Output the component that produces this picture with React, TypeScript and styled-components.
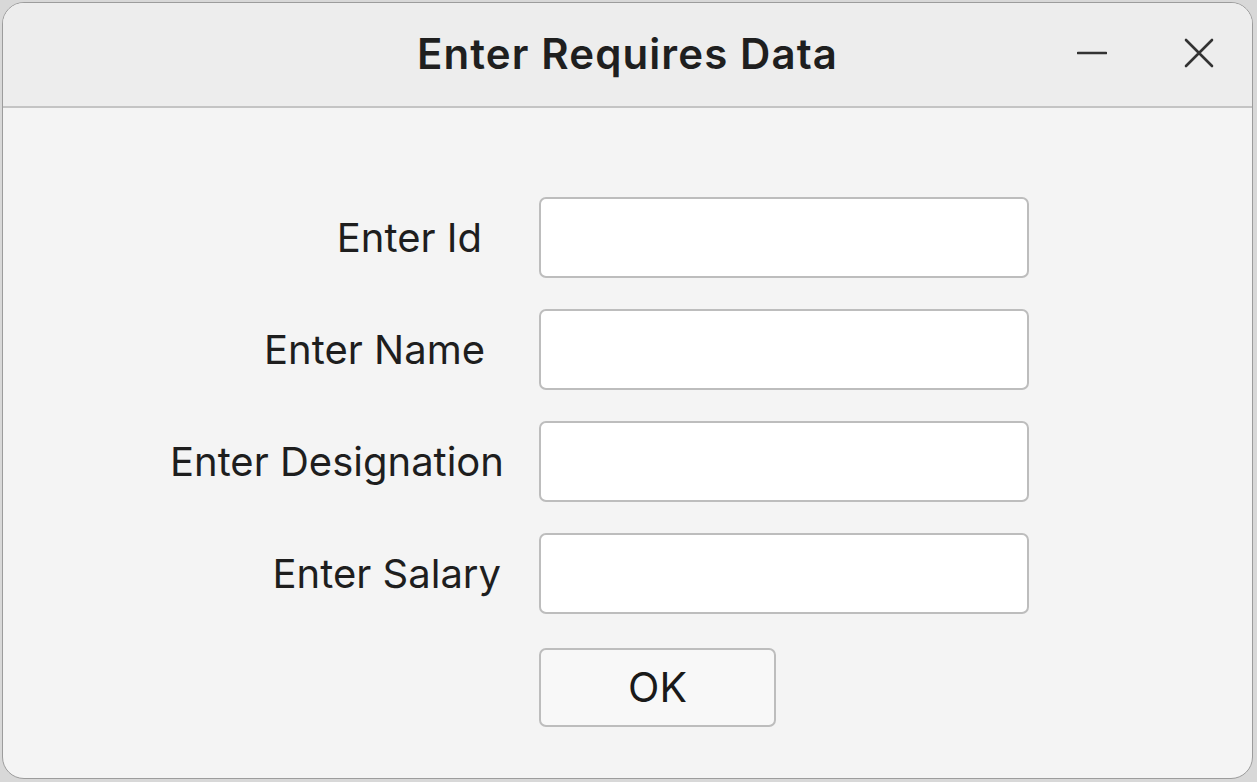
import React from "react";
import styled, { createGlobalStyle } from "styled-components";

const Global = createGlobalStyle`
  html, body { margin: 0; padding: 0; background: #d8d8d8; }
  body { font-family: Inter, "Noto Sans", sans-serif; }
  * { box-sizing: border-box; }
`;

const Page = styled.div`
  width: 1257px;
  height: 782px;
  padding: 2px 0 0 2px;
  background: #d8d8d8;
`;

const Window = styled.div`
  width: 1251px;
  height: 777px;
  border: 1.5px solid #9c9c9c;
  border-radius: 22px;
  overflow: hidden;
  background: #f4f4f4;
  display: flex;
  flex-direction: column;
`;

const TitleBar = styled.div`
  height: 105px;
  flex: none;
  background: #ededed;
  border-bottom: 2px solid #c4c4c4;
  display: grid;
  grid-template-columns: 1fr auto 1fr;
  align-items: center;
`;

const Title = styled.h1`
  grid-column: 2;
  margin: 0 0 2px 0;
  font-family: Inter, sans-serif;
  font-size: 42px;
  font-weight: 600;
  color: #1f1f1f;
  letter-spacing: 1.1px;
`;

const Controls = styled.div`
  grid-column: 3;
  justify-self: end;
  display: flex;
  align-items: center;
  gap: 77px;
  padding-right: 38px;
  margin-bottom: 4px;
`;

const ControlButton = styled.button`
  border: none;
  background: transparent;
  padding: 0;
  width: 30px;
  height: 30px;
  display: flex;
  align-items: center;
  justify-content: center;
  color: #333;
  cursor: pointer;
`;

const Body = styled.div`
  flex: 1;
  display: grid;
  grid-template-columns: 536px 490px;
  grid-auto-rows: 80px;
  row-gap: 32px;
  padding-top: 89px;
  align-items: center;
`;

const Label = styled.label<{ $pr: number }>`
  justify-self: end;
  padding-right: ${(p) => p.$pr}px;
  font-family: Inter, sans-serif;
  font-size: 40px;
  font-weight: 400;
  color: #1e1e1e;
`;

const Input = styled.input`
  width: 490px;
  height: 81px;
  border: 2px solid #bdbdbd;
  border-radius: 7px;
  background: #ffffff;
  outline: none;
  font-size: 30px;
  padding: 0 12px;
`;

const ButtonCell = styled.div`
  grid-column: 2;
  padding-top: 4px;
`;

const OkButton = styled.button`
  width: 237px;
  height: 79px;
  border: 2px solid #bdbdbd;
  border-radius: 7px;
  background: #f8f8f8;
  font-family: Inter, sans-serif;
  font-size: 41px;
  font-weight: 400;
  color: #1a1a1a;
  cursor: pointer;
  padding: 0;
`;

const fields = [
  { label: "Enter Id", pr: 57 },
  { label: "Enter Name", pr: 54 },
  { label: "Enter Designation", pr: 35 },
  { label: "Enter Salary", pr: 38 },
];

export default function App() {
  return (
    <Page>
      <Global />
      <Window>
        <TitleBar>
          <Title>Enter Requires Data</Title>
          <Controls>
            <ControlButton aria-label="Minimize">
              <svg width="30" height="30" viewBox="0 0 30 30">
                <line x1="1" y1="15" x2="29" y2="15" stroke="#333" strokeWidth="2.6" strokeLinecap="round" />
              </svg>
            </ControlButton>
            <ControlButton aria-label="Close">
              <svg width="30" height="30" viewBox="0 0 30 30">
                <path d="M2 2 L28 28 M28 2 L2 28" stroke="#333" strokeWidth="2.6" strokeLinecap="round" />
              </svg>
            </ControlButton>
          </Controls>
        </TitleBar>
        <Body>
          {fields.map((f) => (
            <React.Fragment key={f.label}>
              <Label $pr={f.pr}>{f.label}</Label>
              <Input type="text" />
            </React.Fragment>
          ))}
          <ButtonCell>
            <OkButton>OK</OkButton>
          </ButtonCell>
        </Body>
      </Window>
    </Page>
  );
}
